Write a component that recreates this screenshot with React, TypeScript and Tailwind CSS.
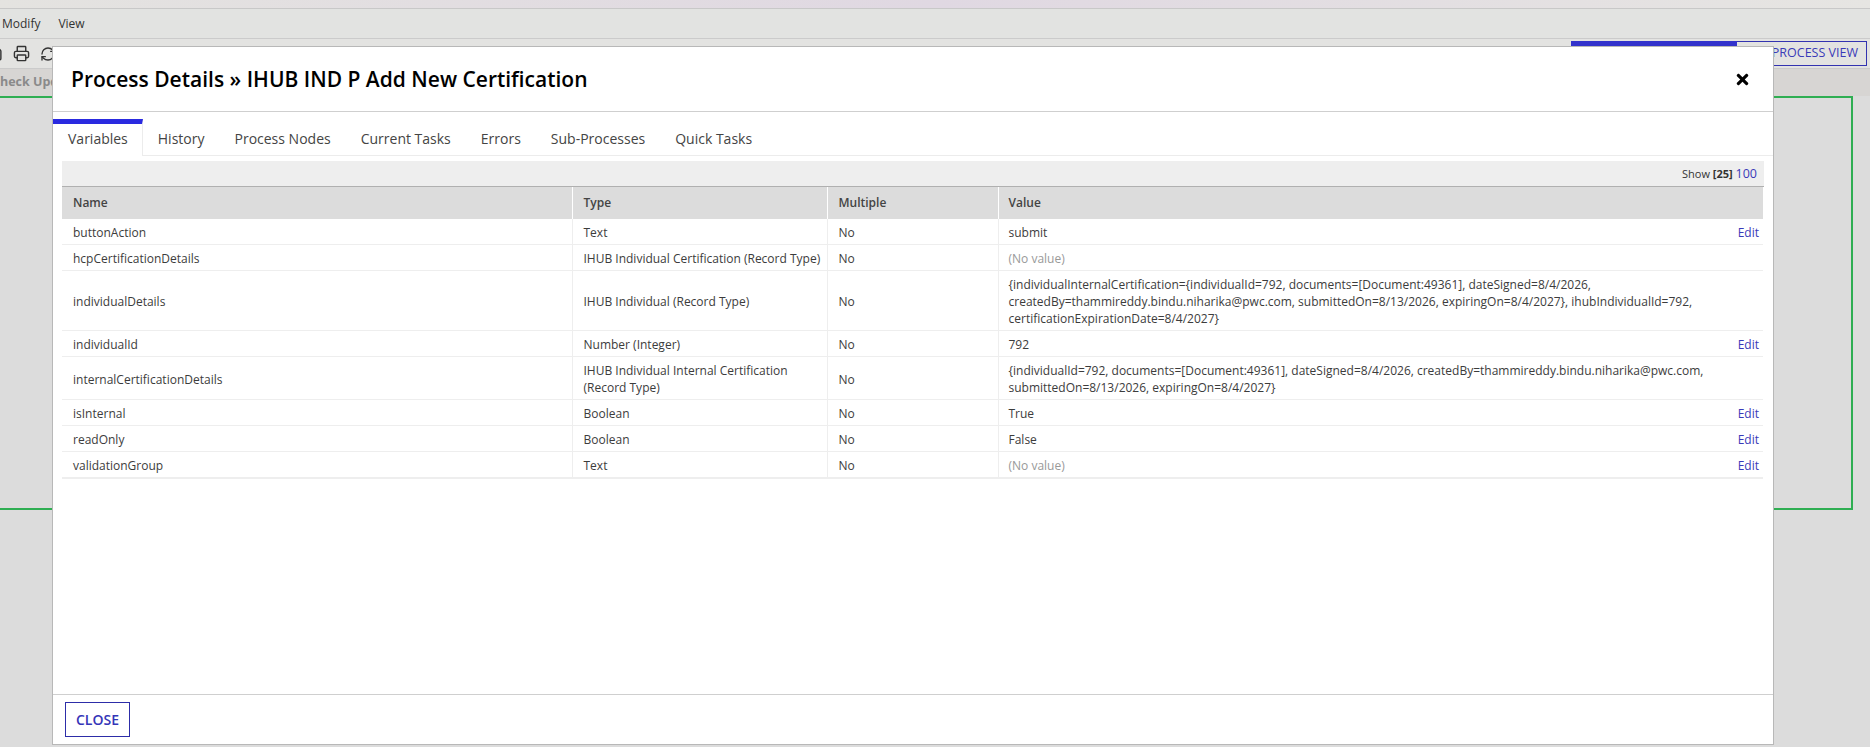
import { Printer, RefreshCw, Save } from "lucide-react";
import { FaTimes } from "react-icons/fa";

const tabs = ["Variables", "History", "Process Nodes", "Current Tasks", "Errors", "Sub-Processes", "Quick Tasks"];

const rows = [
  { name: "buttonAction", type: "Text", value: "submit", edit: true },
  { name: "hcpCertificationDetails", type: "IHUB Individual Certification (Record Type)", value: null, edit: false },
  {
    name: "individualDetails",
    type: "IHUB Individual (Record Type)",
    value:
      "{individualInternalCertification={individualId=792, documents=[Document:49361], dateSigned=8/4/2026, createdBy=thammireddy.bindu.niharika@pwc.com, submittedOn=8/13/2026, expiringOn=8/4/2027}, ihubIndividualId=792, certificationExpirationDate=8/4/2027}",
    edit: false,
  },
  { name: "individualId", type: "Number (Integer)", value: "792", edit: true },
  {
    name: "internalCertificationDetails",
    type: "IHUB Individual Internal Certification (Record Type)",
    value:
      "{individualId=792, documents=[Document:49361], dateSigned=8/4/2026, createdBy=thammireddy.bindu.niharika@pwc.com, submittedOn=8/13/2026, expiringOn=8/4/2027}",
    edit: false,
  },
  { name: "isInternal", type: "Boolean", value: "True", edit: true },
  { name: "readOnly", type: "Boolean", value: "False", edit: true },
  { name: "validationGroup", type: "Text", value: null, edit: true },
];

function ProcessModal() {
  return (
    <div className="absolute left-[52px] top-[46px] flex h-[699px] w-[1722px] flex-col border border-[#b8b8b8] bg-white">
      {/* header */}
      <div className="flex h-[65px] shrink-0 items-center justify-between border-b border-[#cfcfcf] pl-[18px] pr-[23px] pt-[1px]">
        <h1 className="text-[21px] font-semibold text-black">Process Details » IHUB IND P Add New Certification</h1>
        <FaTimes className="h-[17px] w-[15px] text-black" />
      </div>

      {/* tabs */}
      <div className="mt-[7px] flex h-[37px] shrink-0 border-b border-[#ececec] text-[14px] text-[#444]">
        {tabs.map((tab, i) => (
          <div
            key={tab}
            className={
              i === 0
                ? "-mb-px h-[37px] border-r border-t-[5px] border-r-[#ececec] border-t-[#2a2ae0] bg-white pl-[15px] pr-[14px] pt-[4px]"
                : "h-[36px] px-[15px] pt-[9px]"
            }
          >
            {tab}
          </div>
        ))}
      </div>

      {/* table */}
      <div className="ml-[9px] mt-[5px] w-[1702px] text-[12px] leading-[17px] text-[#3c3c3c]">
        <div className="flex h-[26px] items-center justify-end border-b border-[#b0b0b0] bg-[#eeeeee] pr-[7px] text-[11px] text-[#333]">
          Show&nbsp;<b className="font-bold">[25]</b>&nbsp;<span className="text-[12.5px] text-[#3a3ab8]">100</span>
        </div>
        <table className="w-[1701px] table-fixed border-collapse border-b-2 border-[#eeeeee]">
          <thead>
            <tr className="h-[32px] bg-[#dcdcdc] text-left text-[#444]">
              <th className="w-[510px] border-r border-white pb-[2px] pl-[11px] font-semibold">Name</th>
              <th className="w-[255px] border-r border-white pb-[2px] pl-[11px] font-semibold">Type</th>
              <th className="w-[171px] border-r border-white pb-[2px] pl-[11px] font-semibold">Multiple</th>
              <th className="pb-[2px] pl-[10px] font-semibold">Value</th>
            </tr>
          </thead>
          <tbody>
            {rows.map((row) => (
              <tr key={row.name} className="border-b border-[#eeeeee]">
                <td className="border-r border-[#eeeeee] pb-[3px] pl-[11px] pt-[5px]">{row.name}</td>
                <td className="border-r border-[#eeeeee] pb-[3px] pl-[11px] pr-[3px] pt-[5px]">{row.type}</td>
                <td className="border-r border-[#eeeeee] pb-[3px] pl-[11px] pt-[5px]">No</td>
                <td className="pb-[3px] pl-[10px] pt-[5px]">
                  <div className="flex items-center justify-between">
                    <span className={row.value ? "pr-[50px]" : "text-[#999]"}>{row.value ?? "(No value)"}</span>
                    {row.edit && <span className="pr-[4px] text-[#3a3ab8]">Edit</span>}
                  </div>
                </td>
              </tr>
            ))}
          </tbody>
        </table>
      </div>

      {/* footer */}
      <div className="mt-auto flex h-[50px] shrink-0 items-start border-t border-[#cfcfcf] pl-[12px] pt-[7px]">
        <button className="flex h-[35px] w-[65px] items-center justify-center border border-[#2d2da8] text-[14px] font-semibold text-[#3535b8]">
          CLOSE
        </button>
      </div>
    </div>
  );
}

export default function App() {
  return (
    <div className="relative flex h-[747px] w-[1870px] flex-col overflow-hidden bg-[#dcdcdc] font-['Open_Sans',sans-serif]">
      {/* window strip */}
      <div className="h-[9px] shrink-0 border-b border-[#c8c8c8] bg-gradient-to-r from-[#e4e3e0] via-[#e0d8e2] to-[#e6e5e2]" />

      {/* menu bar */}
      <div className="flex h-[30px] shrink-0 items-center gap-[18px] border-b border-[#cbcbcb] bg-[#e2e3e1] pl-[2px] pt-[1px] text-[12px] text-[#333]">
        <span>Modify</span>
        <span>View</span>
      </div>

      {/* toolbar */}
      <div className="flex h-[30px] shrink-0 items-center border-b border-[#cbcbcb] bg-[#e3e3e1] text-[#333]">
        <div className="-ml-[14px] flex items-center gap-[10px]">
          <Save className="h-[17px] w-[17px]" />
          <Printer className="h-[17px] w-[17px]" />
          <RefreshCw className="h-[16px] w-[16px]" />
        </div>
        <div className="ml-auto mr-[3px] flex h-[25px] w-[296px] items-center justify-end border border-[#3333b0] pr-[8px] text-[12.5px] font-medium text-[#3a3ab8]">
          <span className="absolute right-[133px] top-[41px] h-[5px] w-[166px] bg-[#3333cc]" />
          PROCESS VIEW
        </div>
      </div>

      {/* breadcrumb row */}
      <div className="flex h-[27px] shrink-0 items-center bg-[#d7d5d3] pb-[1px] text-[12.5px] font-bold text-[#8a8a8a]">
        <span className="-ml-[8px]">Check Updates</span>
      </div>

      {/* process canvas */}
      <div className="h-[414px] w-[1853px] shrink-0 border-2 border-l-0 border-[#2fae52]" />

      <ProcessModal />
    </div>
  );
}
